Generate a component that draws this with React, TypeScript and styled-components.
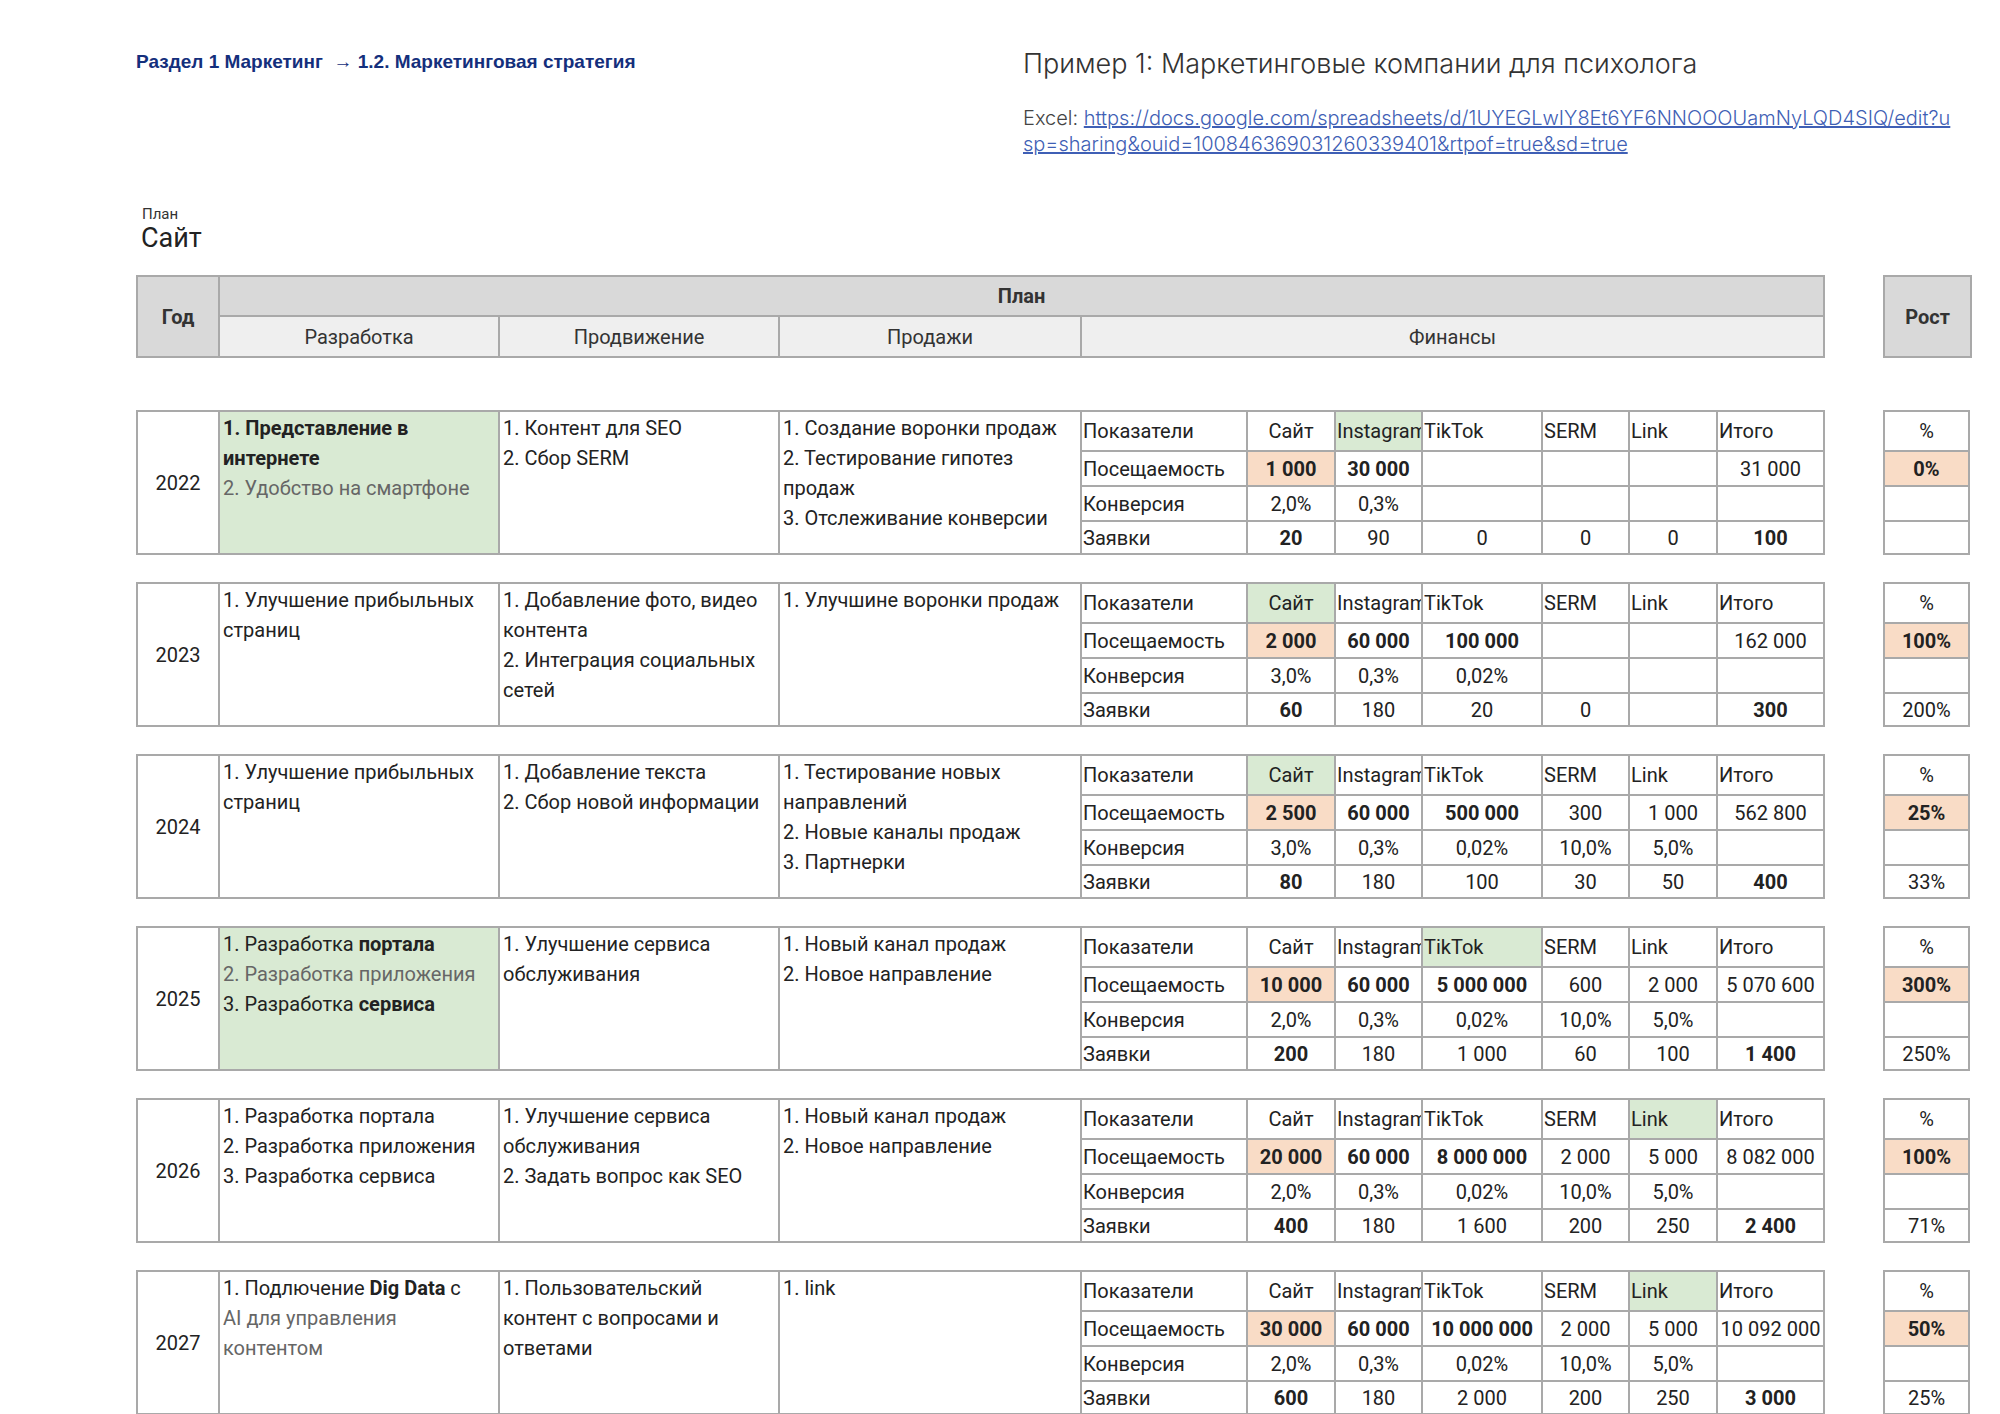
import React from "react";
import styled, { createGlobalStyle } from "styled-components";

const Global = createGlobalStyle`
  html, body { margin: 0; padding: 0; background: #fff; }
  body { width: 2000px; height: 1414px; overflow: hidden; font-family: Roboto, "Liberation Sans", sans-serif; color: #222; }
`;

const Page = styled.div`padding: 49px 0 0 136px;`;
const Top = styled.div`display: flex;`;
const Crumb = styled.div`
  width: 887px; font-family: "Liberation Sans", Arial, sans-serif; font-weight: 700;
  font-size: 19px; line-height: 26px; color: #142f7c;
`;
const Right = styled.div`display: flex; flex-direction: column;`;
const Title = styled.div`font-size: 27px; line-height: 36px; color: #333; margin-top: -3px; font-family: Inter, Roboto, sans-serif; font-weight: 300;`;
const Excel = styled.div`margin-top: 23px; font-size: 20px; line-height: 26px; color: #444; font-family: Inter, Roboto, sans-serif; font-weight: 300;`;
const Link = styled.a`color: #3f5fb5; text-decoration: underline;`;
const Small = styled.div`margin: 48px 0 0 6px; font-size: 15px; line-height: 18px; color: #333;`;
const Big = styled.div`margin-left: 5px; font-size: 27px; line-height: 30px; color: #222;`;

const W = [82, 280, 280, 302, 166, 88, 87, 120, 87, 88, 107];
const B = "2px solid #a9a9a9";

const Row = styled.div<{ $mt: number }>`display: flex; gap: 58px; margin-top: ${p => p.$mt}px;`;
const HeadGrid = styled.div`
  display: grid;
  grid-template-columns: 82px 280px 280px 302px 743px;
  grid-template-rows: 40px 41px;
  border-top: ${B}; border-left: ${B};
`;
const HCell = styled.div<{ $bg: string; $bold?: boolean; $span?: string; $rows?: string }>`
  background: ${p => p.$bg}; border-right: ${B}; border-bottom: ${B};
  display: flex; align-items: center; justify-content: center;
  font-size: 20px; font-weight: ${p => (p.$bold ? 700 : 400)}; color: #333;
  grid-column: ${p => p.$span || "auto"}; grid-row: ${p => p.$rows || "auto"};
`;
const RostHead = styled.div`
  width: 85px; height: 79px; border: ${B}; background: #d9d9d9;
  display: flex; align-items: center; justify-content: center; font-size: 20px; font-weight: 700; color: #333;
`;

const Block = styled.div`
  display: grid;
  grid-template-columns: ${W.map(w => w + "px").join(" ")};
  grid-template-rows: 40px 35px 35px 33px;
  border-top: ${B}; border-left: ${B};
`;
const Cell = styled.div<{ $bg?: string; $align?: string; $bold?: boolean }>`
  border-right: ${B}; border-bottom: ${B}; background: ${p => p.$bg || "#fff"};
  display: flex; align-items: center; justify-content: ${p => p.$align || "center"};
  padding: 0 1px; font-size: 20px; font-weight: ${p => (p.$bold ? 700 : 400)};
  white-space: nowrap; overflow: hidden; color: #222; min-width: 0;
`;
const YearCell = styled(Cell)`grid-row: 1 / 5;`;
const TextCell = styled.div<{ $bg?: string }>`
  grid-row: 1 / 5; border-right: ${B}; border-bottom: ${B}; background: ${p => p.$bg || "#fff"};
  padding: 1px 3px; font-size: 20px; line-height: 30px; color: #222;
`;
const Gray = styled.span`color: #666;`;
const RostGrid = styled.div`
  display: grid; grid-template-columns: 85px; grid-template-rows: 40px 35px 35px 33px;
  border-top: ${B}; border-left: ${B};
`;

const GREEN = "#d9ead3";
const PEACH = "#f9dcc6";

type Y = {
  year: string; dev: React.ReactNode; devGreen?: boolean; prom: React.ReactNode; sales: React.ReactNode;
  green: number; visits: string[]; conv: string[]; leads: string[]; rost: [string, string];
};

const L = (...lines: React.ReactNode[]) => lines.map((l, i) => <div key={i}>{l}</div>);

const data: Y[] = [
  { year: "2022", devGreen: true, dev: L(<b>1. Представление в интернете</b>, <Gray>2. Удобство на смартфоне</Gray>),
    prom: L("1. Контент для SEO", "2. Сбор SERM"), sales: L("1. Создание воронки продаж", "2. Тестирование гипотез продаж", "3. Отслеживание конверсии"),
    green: 1, visits: ["1 000", "30 000", "", "", "", "31 000"], conv: ["2,0%", "0,3%", "", "", "", ""], leads: ["20", "90", "0", "0", "0", "100"], rost: ["0%", ""] },
  { year: "2023", dev: L("1. Улучшение прибыльных страниц"), prom: L("1. Добавление фото, видео контента", "2. Интеграция социальных сетей"),
    sales: L("1. Улучшине воронки продаж"), green: 0, visits: ["2 000", "60 000", "100 000", "", "", "162 000"], conv: ["3,0%", "0,3%", "0,02%", "", "", ""], leads: ["60", "180", "20", "0", "", "300"], rost: ["100%", "200%"] },
  { year: "2024", dev: L("1. Улучшение прибыльных страниц"), prom: L("1. Добавление текста", "2. Сбор новой информации"),
    sales: L("1. Тестирование новых направлений", "2. Новые каналы продаж", "3. Партнерки"), green: 0, visits: ["2 500", "60 000", "500 000", "300", "1 000", "562 800"], conv: ["3,0%", "0,3%", "0,02%", "10,0%", "5,0%", ""], leads: ["80", "180", "100", "30", "50", "400"], rost: ["25%", "33%"] },
  { year: "2025", devGreen: true, dev: L(<>1. Разработка <b>портала</b></>, <Gray>2. Разработка приложения</Gray>, <>3. Разработка <b>сервиса</b></>),
    prom: L("1. Улучшение сервиса обслуживания"), sales: L("1. Новый канал продаж", "2. Новое направление"), green: 2,
    visits: ["10 000", "60 000", "5 000 000", "600", "2 000", "5 070 600"], conv: ["2,0%", "0,3%", "0,02%", "10,0%", "5,0%", ""], leads: ["200", "180", "1 000", "60", "100", "1 400"], rost: ["300%", "250%"] },
  { year: "2026", dev: L("1. Разработка портала", "2. Разработка приложения", "3. Разработка сервиса"), prom: L("1. Улучшение сервиса обслуживания", "2. Задать вопрос как SEO"),
    sales: L("1. Новый канал продаж", "2. Новое направление"), green: 4, visits: ["20 000", "60 000", "8 000 000", "2 000", "5 000", "8 082 000"], conv: ["2,0%", "0,3%", "0,02%", "10,0%", "5,0%", ""], leads: ["400", "180", "1 600", "200", "250", "2 400"], rost: ["100%", "71%"] },
  { year: "2027", dev: L(<>1. Подлючение <b>Dig Data</b> с</>, <Gray>AI для управления</Gray>, <Gray>контентом</Gray>), prom: L("1. Пользовательский контент с вопросами и ответами"),
    sales: L("1. link"), green: 4, visits: ["30 000", "60 000", "10 000 000", "2 000", "5 000", "10 092 000"], conv: ["2,0%", "0,3%", "0,02%", "10,0%", "5,0%", ""], leads: ["600", "180", "2 000", "200", "250", "3 000"], rost: ["50%", "25%"] },
];

const heads = ["Сайт", "Instagram", "TikTok", "SERM", "Link", "Итого"];
const headAlign = ["center", "flex-start", "flex-start", "flex-start", "flex-start", "flex-start"];

function YearBlock({ y, mt }: { y: Y; mt: number }) {
  return (
    <Row $mt={mt}>
      <Block>
        <YearCell>{y.year}</YearCell>
        <TextCell $bg={y.devGreen ? GREEN : undefined}>{y.dev}</TextCell>
        <TextCell>{y.prom}</TextCell>
        <TextCell>{y.sales}</TextCell>
        <Cell $align="flex-start">Показатели</Cell>
        {heads.map((h, i) => (
          <Cell key={h} $align={headAlign[i]} $bg={i === y.green ? GREEN : undefined}>{h}</Cell>
        ))}
        <Cell $align="flex-start">Посещаемость</Cell>
        {y.visits.map((v, i) => (
          <Cell key={i} $bold={i < 3} $bg={i === 0 ? PEACH : undefined}>{v}</Cell>
        ))}
        <Cell $align="flex-start">Конверсия</Cell>
        {y.conv.map((v, i) => <Cell key={i}>{v}</Cell>)}
        <Cell $align="flex-start">Заявки</Cell>
        {y.leads.map((v, i) => <Cell key={i} $bold={i === 0 || i === 5}>{v}</Cell>)}
      </Block>
      <RostGrid>
        <Cell>%</Cell>
        <Cell $bold $bg={PEACH}>{y.rost[0]}</Cell>
        <Cell />
        <Cell>{y.rost[1]}</Cell>
      </RostGrid>
    </Row>
  );
}

export default function App() {
  return (
    <Page>
      <Global />
      <Top>
        <Crumb>Раздел 1 Маркетинг&nbsp; → 1.2. Маркетинговая стратегия</Crumb>
        <Right>
          <Title>Пример 1: Маркетинговые компании для психолога</Title>
          <Excel>
            Excel: <Link href="#">https://docs.google.com/spreadsheets/d/1UYEGLwIY8Et6YF6NNOOOUamNyLQD4SIQ/edit?u<br />sp=sharing&amp;ouid=100846369031260339401&amp;rtpof=true&amp;sd=true</Link>
          </Excel>
        </Right>
      </Top>
      <Small>План</Small>
      <Big>Сайт</Big>
      <Row $mt={22}>
        <HeadGrid>
          <HCell $bg="#d9d9d9" $bold $rows="1 / 3">Год</HCell>
          <HCell $bg="#d9d9d9" $bold $span="2 / 6">План</HCell>
          <HCell $bg="#efefef">Разработка</HCell>
          <HCell $bg="#efefef">Продвижение</HCell>
          <HCell $bg="#efefef">Продажи</HCell>
          <HCell $bg="#efefef">Финансы</HCell>
        </HeadGrid>
        <RostHead>Рост</RostHead>
      </Row>
      {data.map((y, i) => <YearBlock key={y.year} y={y} mt={i === 0 ? 52 : 27} />)}
    </Page>
  );
}
